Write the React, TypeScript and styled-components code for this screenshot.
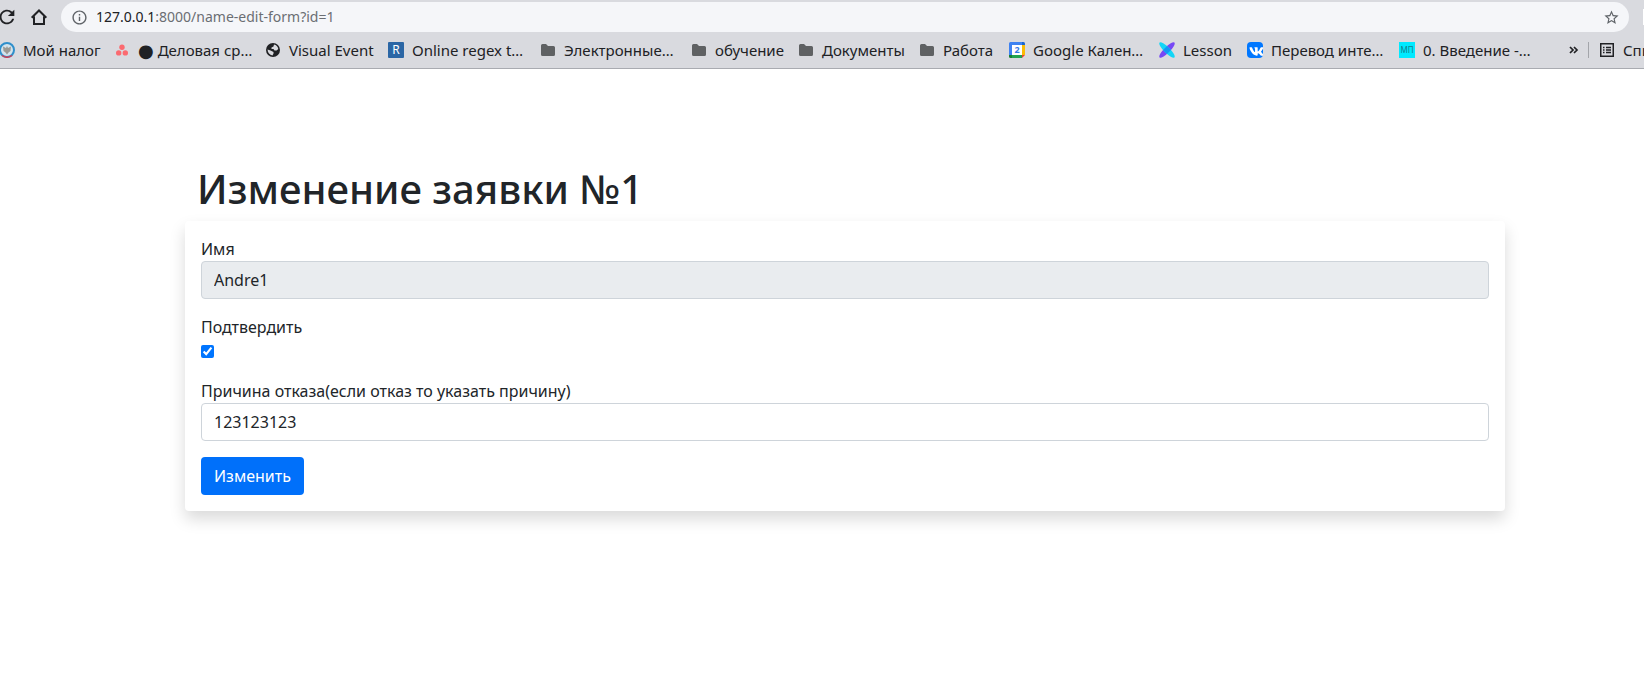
import React from "react";
import styled, { createGlobalStyle } from "styled-components";
import { FaVk } from "react-icons/fa";
import { MdInfoOutline, MdRefresh, MdStarBorder } from "react-icons/md";

const GlobalStyle = createGlobalStyle`
  *, *::before, *::after { box-sizing: border-box; }
  body {
    margin: 0;
    background: #fff;
    color: #212529;
    font-family: "Noto Sans", "Open Sans", sans-serif;
    font-size: 16px;
    line-height: 24px;
    overflow-x: hidden;
  }
`;

const Chrome = styled.header`
  background: #d9dadf;
  border-bottom: 1px solid #a9abb1;
  padding-top: 2px;
  overflow: hidden;
`;

const Toolbar = styled.div`
  display: flex;
  align-items: center;
  height: 30px;
`;

const ToolButton = styled.button`
  display: flex;
  align-items: center;
  justify-content: center;
  flex: none;
  width: 32px;
  height: 30px;
  padding: 0;
  border: 0;
  background: none;
  color: #202124;
`;

const NavButtons = styled.div`
  display: flex;
  flex: none;
  margin-left: -9px;
  width: 70px;
`;

const AddressBar = styled.div`
  display: flex;
  align-items: center;
  flex: 1;
  height: 30px;
  padding: 0 2px 0 10px;
  border-radius: 15px;
  background: #f5f6f9;
  color: #5f6368;
  font-size: 14px;
`;

const Url = styled.div`
  flex: 1;
  margin-left: 8px;
  color: #6b6e73;
  b { font-weight: 400; color: #202124; }
`;

const ExtensionSlot = styled.div`
  flex: none;
  width: 1px;
  height: 16px;
  margin-left: 14px;
  background: #fff;
`;

const BookmarkBar = styled.nav`
  display: flex;
  align-items: center;
  height: 36px;
  margin-left: -1px;
`;

const Bookmark = styled.a<{ $label?: number }>`
  display: grid;
  grid-template-columns: 16px ${(p) => (p.$label ? `${p.$label}px` : "auto")};
  column-gap: 8px;
  align-items: center;
  flex: none;
  margin-right: 16px;
  color: #202124;
  font-size: 15px;
  text-decoration: none;
  white-space: nowrap;
  svg { display: block; }
`;

const BarEnd = styled.div`
  display: flex;
  align-items: center;
  flex: none;
  width: 84px;
  margin-left: auto;
`;

const Divider = styled.span`
  flex: none;
  width: 1px;
  height: 16px;
  margin-right: 10px;
  background: #a3a5aa;
`;

const MoreButton = styled(ToolButton)`
  width: 28px;
  justify-content: flex-start;
  padding-left: 9px;
`;

const Main = styled.main`
  padding: 96px 139px 48px 185px;
`;

const Title = styled.h1`
  margin: 0 0 8px;
  padding: 0 12px;
  font-size: 40px;
  font-weight: 500;
  line-height: 48px;
`;

const Card = styled.form`
  padding: 16px;
  border-radius: 4px;
  background: #fff;
  box-shadow: 0 8px 16px rgba(0, 0, 0, 0.15);
`;

const Field = styled.div`
  display: flex;
  flex-direction: column;
  margin-bottom: 16px;
`;

const Label = styled.label`
  align-self: flex-start;
`;

const TextInput = styled.input`
  width: 100%;
  height: 38px;
  padding: 6px 12px;
  border: 1px solid #ced4da;
  border-radius: 4px;
  background: #fff;
  color: #212529;
  font: inherit;
  &:disabled { background: #e9ecef; opacity: 1; }
`;

const CheckRow = styled.div`
  display: flex;
  align-items: center;
  height: 24px;
`;

const Checkbox = styled.input`
  width: 13px;
  height: 13px;
  margin: 0;
  accent-color: #0075ff;
`;

const Submit = styled.button`
  display: block;
  height: 38px;
  padding: 6px 13px;
  border: 0;
  border-radius: 4px;
  background: #0070fa;
  color: #fff;
  font: inherit;
`;

const HomeIcon = () => (
  <svg width="18" height="18" viewBox="0 0 18 18" fill="none" stroke="#202124" strokeWidth="2">
    <path d="M1.700 9.800L9 2.500L16.300 9.800M4 8.500V16H14V8.500" />
  </svg>
);

const Folder = () => (
  <svg width="16" height="16" viewBox="0 0 16 16">
    <path d="M1 3.500Q1 2 2.500 2H6L8 4H13.500Q15 4 15 5.500V12.500Q15 14 13.500 14H2.500Q1 14 1 12.500Z" fill="#5f6163" />
  </svg>
);

const TaxIcon = () => (
  <svg width="16" height="16" viewBox="0 0 16 16">
    <circle cx="8" cy="8" r="7" fill="#d4e3ec" stroke="#2f8fcb" strokeWidth="2" />
    <path d="M3 13.500Q8 17 13 13.500" fill="none" stroke="#d8394c" strokeWidth="1.500" />
    <path d="M4 4.500L7 6L8 4L9 6L12 4.500L11.500 9L9.500 10.500L8 12.500L6.500 10.500L4.500 9Z" fill="#9b9a94" />
  </svg>
);

const AsanaIcon = () => (
  <svg width="16" height="16" viewBox="0 0 16 16" fill="#fb6a70">
    <circle cx="8" cy="5.200" r="2.700" />
    <circle cx="4.700" cy="10.900" r="2.700" />
    <circle cx="11.300" cy="10.900" r="2.700" />
  </svg>
);

const GlobeIcon = () => (
  <svg width="16" height="16" viewBox="0 0 16 16">
    <circle cx="8" cy="8" r="7" fill="#202124" />
    <path d="M9 2.600Q12.500 3.400 13.300 7L11.500 8.500H9.500L8.500 7H6.500V5.500L8.500 4.500Z" fill="#d9dadf" />
    <path d="M2.500 7.500L5.500 8.500L8.500 10V11.500L7.500 13.500Q3 12.500 2.500 7.500Z" fill="#d9dadf" />
  </svg>
);

const RegexIcon = () => (
  <svg width="16" height="16" viewBox="0 0 16 16">
    <rect width="16" height="16" rx="1" fill="#2b66a5" />
    <text x="8" y="12" textAnchor="middle" fontSize="12" fill="#fff">R</text>
  </svg>
);

const CalendarIcon = () => (
  <svg width="16" height="16" viewBox="0 0 16 16">
    <rect x="3" y="3" width="10" height="10" fill="#fff" />
    <path d="M0 1.500Q0 0 1.500 0H13V3H3V13H0Z" fill="#3e82f1" />
    <path d="M13 0H14.500Q16 0 16 1.500V3H13Z" fill="#1967d2" />
    <path d="M13 3H16V13H13Z" fill="#fbbc04" />
    <path d="M3 13H13V16H3Z" fill="#22a351" />
    <path d="M0 13H3V16H1.500Q0 16 0 14.500Z" fill="#188038" />
    <path d="M13 13H16L13 16Z" fill="#ea4335" />
    <text x="8" y="11" textAnchor="middle" fontSize="9" fontWeight="700" fill="#3578e5">2</text>
  </svg>
);

const LessonIcon = () => (
  <svg width="16" height="16" viewBox="0 0 16 16">
    <ellipse cx="8" cy="8" rx="10.500" ry="3" transform="rotate(-45 8 8)" fill="#7748f5" />
    <ellipse cx="8" cy="8" rx="10.500" ry="3" transform="rotate(45 8 8)" fill="#12d6f7" />
    <path d="M8 4L12 8L8 12L4 8Z" fill="#1297f5" />
  </svg>
);

const VkIcon = () => (
  <svg width="16" height="16" viewBox="0 0 16 16">
    <rect width="16" height="16" rx="4" fill="#0077ff" />
    <FaVk x="2" y="2" width="12" height="12" color="#fff" />
  </svg>
);

const CourseIcon = () => (
  <svg width="16" height="16" viewBox="0 0 16 16">
    <rect width="16" height="16" fill="#00eaff" />
    <text x="8" y="11" textAnchor="middle" fontSize="8" fill="#16808c">МП</text>
  </svg>
);

const ListIcon = () => (
  <svg width="16" height="16" viewBox="0 0 16 16" fill="none" stroke="#202124">
    <rect x="1.750" y="1.750" width="12.500" height="12.500" strokeWidth="1.500" />
    <path d="M4 5.500H5.500M7 5.500H12M4 8H5.500M7 8H12M4 10.500H5.500M7 10.500H12" strokeWidth="1.300" />
  </svg>
);

const Dot = styled.span`
  font-family: "DejaVu Sans", sans-serif;
  font-size: 18px;
  line-height: 16px;
  vertical-align: -1px;
`;

const bookmarks: { icon: React.ReactNode; text: string; width: number; dot?: boolean }[] = [
  { icon: <TaxIcon />, text: "Мой налог", width: 75 },
  { icon: <AsanaIcon />, text: "Деловая ср…", width: 111, dot: true },
  { icon: <GlobeIcon />, text: "Visual Event", width: 83 },
  { icon: <RegexIcon />, text: "Online regex t…", width: 112 },
  { icon: <Folder />, text: "Электронные…", width: 111 },
  { icon: <Folder />, text: "обучение", width: 67 },
  { icon: <Folder />, text: "Документы", width: 81 },
  { icon: <Folder />, text: "Работа", width: 50 },
  { icon: <CalendarIcon />, text: "Google Кален…", width: 110 },
  { icon: <LessonIcon />, text: "Lesson", width: 48 },
  { icon: <VkIcon />, text: "Перевод инте…", width: 112 },
  { icon: <CourseIcon />, text: "0. Введение -…", width: 106 },
];

export default function App() {
  return (
    <>
      <GlobalStyle />
      <Chrome>
        <Toolbar>
          <NavButtons>
            <ToolButton aria-label="Обновить"><MdRefresh size={22} /></ToolButton>
            <ToolButton aria-label="Домой"><HomeIcon /></ToolButton>
          </NavButtons>
          <AddressBar>
            <MdInfoOutline size={17} />
            <Url><b>127.0.0.1</b>:8000/name-edit-form?id=1</Url>
            <ToolButton aria-label="Добавить в закладки"><MdStarBorder size={17} color="#5f6368" /></ToolButton>
          </AddressBar>
          <ExtensionSlot />
        </Toolbar>
        <BookmarkBar>
          {bookmarks.map((b) => (
            <Bookmark key={b.text} href="#" $label={b.width}>
              {b.icon}
              <span>{b.dot && <Dot>●</Dot>}{b.dot && " "}{b.text}</span>
            </Bookmark>
          ))}
          <BarEnd>
            <MoreButton aria-label="Другие закладки">
              <svg width="10" height="10" viewBox="0 0 10 10" fill="none" stroke="#202124" strokeWidth="1.700">
                <path d="M1 2L4 5L1 8M5 2L8 5L5 8" />
              </svg>
            </MoreButton>
            <Divider />
            <Bookmark href="#">
              <ListIcon />
              <span>Список для чтения</span>
            </Bookmark>
          </BarEnd>
        </BookmarkBar>
      </Chrome>
      <Main>
        <Title>Изменение заявки №1</Title>
        <Card onSubmit={(e) => e.preventDefault()}>
          <Field>
            <Label htmlFor="name">Имя</Label>
            <TextInput id="name" defaultValue="Andre1" disabled />
          </Field>
          <Field>
            <Label htmlFor="confirm">Подтвердить</Label>
            <CheckRow><Checkbox id="confirm" type="checkbox" defaultChecked /></CheckRow>
          </Field>
          <Field>
            <Label htmlFor="reason">Причина отказа(если отказ то указать причину)</Label>
            <TextInput id="reason" defaultValue="123123123" />
          </Field>
          <Submit type="submit">Изменить</Submit>
        </Card>
      </Main>
    </>
  );
}
